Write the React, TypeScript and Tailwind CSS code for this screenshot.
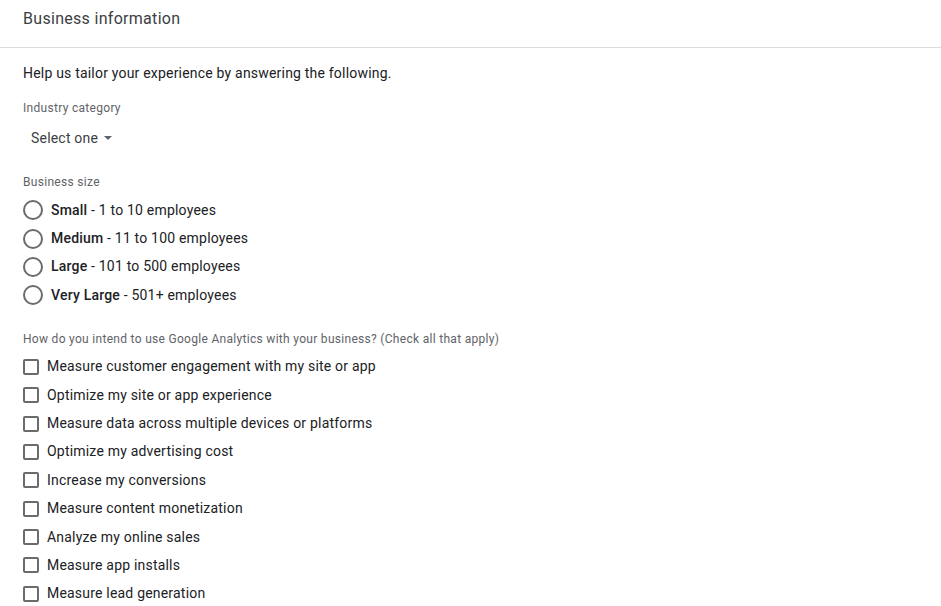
const SIZES = [
  { name: "Small", detail: "1 to 10 employees" },
  { name: "Medium", detail: "11 to 100 employees" },
  { name: "Large", detail: "101 to 500 employees" },
  { name: "Very Large", detail: "501+ employees" },
];

const USES = [
  "Measure customer engagement with my site or app",
  "Optimize my site or app experience",
  "Measure data across multiple devices or platforms",
  "Optimize my advertising cost",
  "Increase my conversions",
  "Measure content monetization",
  "Analyze my online sales",
  "Measure app installs",
  "Measure lead generation",
];

function Radio() {
  return (
    <span className="h-5 w-5 shrink-0 rounded-full border-2 border-[#6b6b6b] bg-white" />
  );
}

function Checkbox() {
  return (
    <span className="h-4 w-4 shrink-0 rounded-[2px] border-2 border-[#6b6b6b] bg-white" />
  );
}

export default function App() {
  return (
    <div className="h-[606px] w-[941px] overflow-hidden bg-white font-['Roboto',_'Liberation_Sans',_sans-serif] text-[#202124]">
      <div className="flex h-[48px] items-start border-b border-[#dadce0] px-[23px] pt-[9px]">
        <h1 className="text-[16px] leading-[20px] tracking-[0.3px] text-[#3c4043]">
          Business information
        </h1>
      </div>

      <div className="px-[23px]">
        <p className="mt-[16px] text-[14px] leading-[18px] tracking-[0.2px]">
          Help us tailor your experience by answering the following.
        </p>

        <p className="mt-[18px] text-[12px] leading-[16px] tracking-[0.3px] text-[#5f6368]">
          Industry category
        </p>
        <button
          type="button"
          className="mt-[13px] ml-[8px] flex items-center gap-[6px] text-[14px] leading-[18px] tracking-[0.2px] text-[#3c4043]"
        >
          Select one
          <svg width="8" height="4" viewBox="0 0 8 4" aria-hidden>
            <path d="M0 0 L8 0 L4 4 Z" fill="#5f6368" />
          </svg>
        </button>

        <p className="mt-[27px] text-[12px] leading-[16px] tracking-[0.3px] text-[#5f6368]">
          Business size
        </p>
        <div className="mt-[6px] flex flex-col">
          {SIZES.map((s) => (
            <label
              key={s.name}
              className="flex h-[28.4px] items-center gap-[8px] text-[14px] tracking-[0.2px]"
            >
              <Radio />
              <span>
                <span className="font-medium">{s.name}</span> - {s.detail}
              </span>
            </label>
          ))}
        </div>

        <p className="mt-[21px] text-[12px] leading-[16px] tracking-[0.3px] text-[#5f6368]">
          How do you intend to use Google Analytics with your business? (Check all that apply)
        </p>
        <div className="mt-[6px] flex flex-col">
          {USES.map((u) => (
            <label
              key={u}
              className="flex h-[28.4px] items-center gap-[8px] text-[14px] tracking-[0.2px]"
            >
              <Checkbox />
              <span>{u}</span>
            </label>
          ))}
        </div>
      </div>
    </div>
  );
}
